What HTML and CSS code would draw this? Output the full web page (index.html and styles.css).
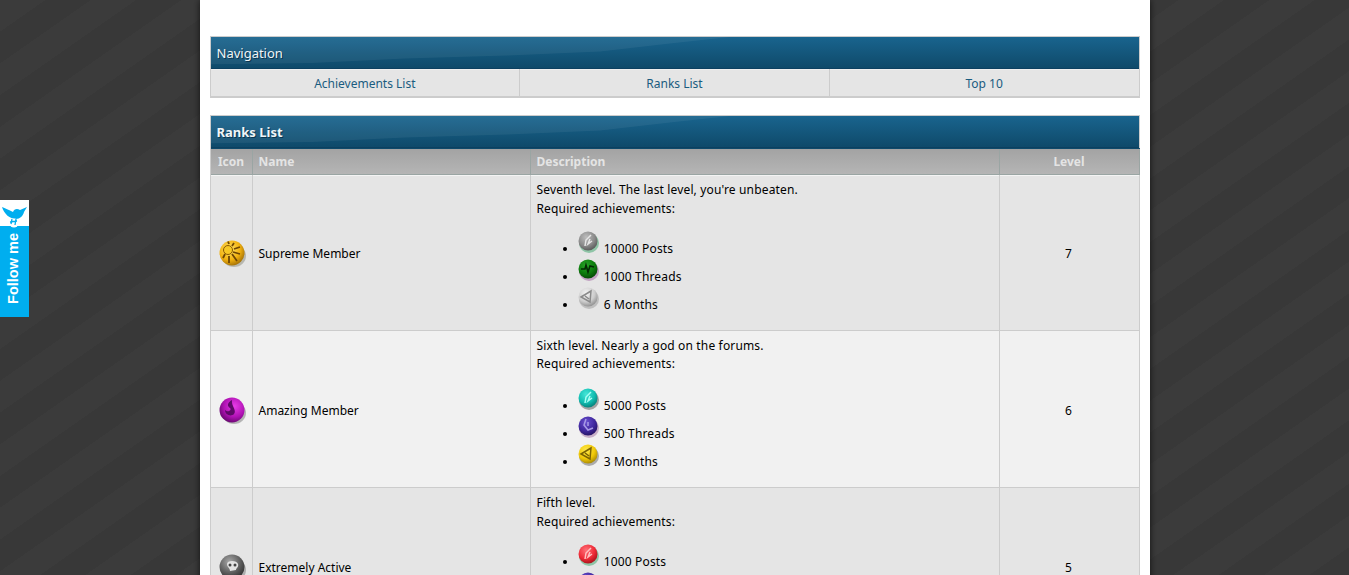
FILE: index.html
```html
<!DOCTYPE html>
<html lang="en">
<head>
    <meta charset="UTF-8">
    <title>Ranks List</title>
    <link rel="stylesheet" href="styles.css">
</head>
<body>

    <!-- shared gradients for the medals -->
    <svg class="defs" width="0" height="0" aria-hidden="true">
        <defs>
            <radialGradient id="ballGold" cx="40%" cy="35%" r="70%"><stop offset="0" stop-color="#ffe46a"/><stop offset=".6" stop-color="#f2b210"/><stop offset="1" stop-color="#9c6a05"/></radialGradient>
            <radialGradient id="ballPurple" cx="60%" cy="35%" r="70%"><stop offset="0" stop-color="#e83ce8"/><stop offset=".6" stop-color="#b012b4"/><stop offset="1" stop-color="#62066a"/></radialGradient>
            <radialGradient id="ballDark" cx="40%" cy="30%" r="75%"><stop offset="0" stop-color="#a8a8a8"/><stop offset=".6" stop-color="#5c5c5c"/><stop offset="1" stop-color="#2c2c2c"/></radialGradient>
            <radialGradient id="ballGrey" cx="40%" cy="30%" r="75%"><stop offset="0" stop-color="#bdbdbd"/><stop offset=".6" stop-color="#8a8a8a"/><stop offset="1" stop-color="#555"/></radialGradient>
            <radialGradient id="ballGreen" cx="40%" cy="30%" r="75%"><stop offset="0" stop-color="#28a528"/><stop offset=".6" stop-color="#0c7a0c"/><stop offset="1" stop-color="#064206"/></radialGradient>
            <radialGradient id="ballSilver" cx="40%" cy="30%" r="75%"><stop offset="0" stop-color="#f4f4f4"/><stop offset=".6" stop-color="#cdcdcd"/><stop offset="1" stop-color="#8a8a8a"/></radialGradient>
            <radialGradient id="ballTeal" cx="40%" cy="30%" r="75%"><stop offset="0" stop-color="#45e6d8"/><stop offset=".6" stop-color="#10bcb0"/><stop offset="1" stop-color="#067a74"/></radialGradient>
            <radialGradient id="ballIndigo" cx="40%" cy="30%" r="75%"><stop offset="0" stop-color="#6a50d0"/><stop offset=".6" stop-color="#40289e"/><stop offset="1" stop-color="#22135e"/></radialGradient>
            <radialGradient id="ballYellow" cx="40%" cy="30%" r="75%"><stop offset="0" stop-color="#ffe94a"/><stop offset=".6" stop-color="#f0c808"/><stop offset="1" stop-color="#a08204"/></radialGradient>
            <radialGradient id="ballRed" cx="40%" cy="30%" r="75%"><stop offset="0" stop-color="#ff7078"/><stop offset=".6" stop-color="#ee2a36"/><stop offset="1" stop-color="#a01018"/></radialGradient>
        </defs>
    </svg>

    <a class="follow" href="#">
        <span class="follow-top">
            <svg width="29" height="29" viewBox="0 0 29 29">
                <path d="M2 7 C5 8 9 10 13 12 C14 9 17 8 20 10 L27 7 L24 12 C23 16 20 19 16 19 C10 19 4 14 2 7Z" fill="#00aeef"/>
                <circle cx="14" cy="23" r="4.500" fill="#fff"/>
                <path d="M12 19 L11 24 M16 19 L15 25 M10 22 L17 21" stroke="#00aeef" stroke-width="1.300" fill="none"/>
            </svg>
        </span>
        <span class="follow-text">Follow me</span>
    </a>

    <div class="wrapper">

        <table class="tborder nav">
            <tr><td class="thead" colspan="3"><span class="thead-text">Navigation</span></td></tr>
            <tr>
                <td class="navcell"><a href="#">Achievements List</a></td>
                <td class="navcell"><a href="#">Ranks List</a></td>
                <td class="navcell"><a href="#">Top 10</a></td>
            </tr>
        </table>

        <table class="tborder ranks">
            <colgroup>
                <col class="col-icon">
                <col class="col-name">
                <col class="col-desc">
                <col class="col-level">
            </colgroup>
            <tr><td class="thead" colspan="4"><strong class="thead-text">Ranks List</strong></td></tr>
            <tr class="tcat">
                <td class="center">Icon</td>
                <td>Name</td>
                <td>Description</td>
                <td class="center">Level</td>
            </tr>

            <tr class="row1">
                <td class="icon-cell">
                    <svg class="rank-icon" viewBox="0 0 28 28"><ellipse cx="15" cy="16" rx="12" ry="11" fill="#8a8a7a" opacity=".5"/><circle cx="13" cy="13" r="12.500" fill="url(#ballGold)"/><circle cx="9" cy="10" r="4.500" fill="#f7c824" stroke="#8a5a04"/><path d="M9 1.500 L10 4 M15 3 L13 6 M21 7 L15 9 M21 14 L14 12 M18 21 L13 14 M10 23 L10 16 M4 18 L6 14" stroke="#6e4604" stroke-width="1.800"/></svg>
                </td>
                <td class="mid">Supreme Member</td>
                <td>
                    Seventh level. The last level, you're unbeaten.<br>
                    Required achievements:<br>
                    <ul class="reqs">
                        <li><svg class="medal" viewBox="0 0 22 22"><circle cx="11" cy="12" r="10" fill="#3aa56a" opacity=".5"/><circle cx="10" cy="10" r="9.500" fill="url(#ballGrey)"/><path d="M13 4 L8 9 L7 15 M12 8 L10 13 L14 10" stroke="#e6e6e6" stroke-width="1.500" fill="none"/></svg> 10000 Posts</li>
                        <li><svg class="medal" viewBox="0 0 22 22"><circle cx="11" cy="12" r="10" fill="#a060a0" opacity=".5"/><circle cx="10" cy="10" r="9.500" fill="url(#ballGreen)"/><path d="M3 10 L7 10 L8 6 L10 13 L12 7 L16 8" stroke="#032a03" stroke-width="1.600" fill="none"/></svg> 1000 Threads</li>
                        <li><svg class="medal" viewBox="0 0 22 22"><circle cx="11" cy="12" r="10" fill="#888" opacity=".4"/><circle cx="10" cy="10" r="9.500" fill="url(#ballSilver)"/><path d="M3 10 L13 4 L12 15 Z M7 9 L11 12" stroke="#8a8a8a" stroke-width="1.500" fill="none"/></svg> 6 Months</li>
                    </ul>
                </td>
                <td class="mid center">7</td>
            </tr>

            <tr class="row2">
                <td class="icon-cell">
                    <svg class="rank-icon" viewBox="0 0 28 28"><ellipse cx="15" cy="16" rx="12" ry="11" fill="#777" opacity=".5"/><circle cx="13" cy="13" r="12.500" fill="url(#ballPurple)"/><path d="M13 3 C8 6 8 9 11 11 C13 13 9 16 6 13 C6 18 12 20 15 17 C18 13 12 9 13 3Z" fill="#5c0a66"/></svg>
                </td>
                <td class="mid">Amazing Member</td>
                <td>
                    Sixth level. Nearly a god on the forums.<br>
                    Required achievements:<br>
                    <ul class="reqs">
                        <li><svg class="medal" viewBox="0 0 22 22"><circle cx="11" cy="12" r="10" fill="#555" opacity=".5"/><circle cx="10" cy="10" r="9.500" fill="url(#ballTeal)"/><path d="M13 4 L8 9 L7 15 M12 8 L10 13 L14 10" stroke="#a8fff4" stroke-width="1.500" fill="none"/></svg> 5000 Posts</li>
                        <li><svg class="medal" viewBox="0 0 22 22"><circle cx="11" cy="12" r="10" fill="#a070a0" opacity=".5"/><circle cx="10" cy="10" r="9.500" fill="url(#ballIndigo)"/><path d="M8 3 L6 9 L10 14 L15 12 M10 6 L10 10" stroke="#a89ae6" stroke-width="1.500" fill="none"/></svg> 500 Threads</li>
                        <li><svg class="medal" viewBox="0 0 22 22"><circle cx="11" cy="12" r="10" fill="#666" opacity=".5"/><circle cx="10" cy="10" r="9.500" fill="url(#ballYellow)"/><path d="M3 10 L13 4 L12 15 Z M7 9 L11 12" stroke="#7a6204" stroke-width="1.500" fill="none"/></svg> 3 Months</li>
                    </ul>
                </td>
                <td class="mid center">6</td>
            </tr>

            <tr class="row1 row3">
                <td class="icon-cell">
                    <svg class="rank-icon" viewBox="0 0 28 28"><ellipse cx="15" cy="16" rx="12" ry="11" fill="#777" opacity=".5"/><circle cx="13" cy="13" r="12.500" fill="url(#ballDark)"/><path d="M8 10 C8 6 18 6 19 10 C20 13 17 14 17 16 L11 17 C11 14 8 13 8 10Z" fill="#e4e4e4"/><circle cx="11" cy="11" r="1.500" fill="#444"/><circle cx="16" cy="11" r="1.500" fill="#444"/></svg>
                </td>
                <td class="mid">Extremely Active</td>
                <td>
                    Fifth level.<br>
                    Required achievements:<br>
                    <ul class="reqs">
                        <li><svg class="medal" viewBox="0 0 22 22"><circle cx="11" cy="12" r="10" fill="#3aa56a" opacity=".5"/><circle cx="10" cy="10" r="9.500" fill="url(#ballRed)"/><path d="M13 4 L8 9 L7 15 M12 8 L10 13 L14 10" stroke="#ffc0c0" stroke-width="1.500" fill="none"/></svg> 1000 Posts</li>
                        <li><svg class="medal" viewBox="0 0 22 22"><circle cx="11" cy="12" r="10" fill="#a070a0" opacity=".5"/><circle cx="10" cy="10" r="9.500" fill="url(#ballIndigo)"/><path d="M8 3 L6 9 L10 14 L15 12 M10 6 L10 10" stroke="#a89ae6" stroke-width="1.500" fill="none"/></svg> 250 Threads</li>
                        <li><svg class="medal" viewBox="0 0 22 22"><circle cx="11" cy="12" r="10" fill="#666" opacity=".5"/><circle cx="10" cy="10" r="9.500" fill="url(#ballGrey)"/><path d="M3 10 L13 4 L12 15 Z M7 9 L11 12" stroke="#e6e6e6" stroke-width="1.500" fill="none"/></svg> 1 Month</li>
                    </ul>
                </td>
                <td class="mid center">5</td>
            </tr>
        </table>
    </div>

</body>
</html>
```

FILE: styles.css
```css
html, body {
    height: 100%;
    overflow: hidden;
}
body {
    margin: 0;
    font-family: "Noto Sans", Tahoma, sans-serif;
    font-size: 12px;
    color: #000;
    background-color: #3a3a3a;
    background-image: repeating-linear-gradient(145deg, #3b3b3b 0, #3b3b3b 26px, #383838 26px, #383838 52px);
}
a {
    color: #1a5c80;
    text-decoration: none;
}
.defs {
    position: absolute;
}
.wrapper {
    width: 930px;
    margin: 0 auto;
    padding: 36px 10px 0;
    background: #fff;
    box-shadow: 0 0 7px rgba(0, 0, 0, 0.7);
    min-height: 800px;
}
.tborder {
    width: 930px;
    table-layout: fixed;
    border-collapse: separate;
    border-spacing: 1px;
    background: #ccc;
    margin-bottom: 17px;
}
.nav {
    border-bottom: 1px solid #ccc;
}
.col-icon {
    width: 41px;
}
.col-name {
    width: 277px;
}
.col-desc {
    width: 468px;
}
.col-level {
    width: 139px;
}
.tborder td {
    padding: 0 5px 0 6px;
}
.tborder td.thead {
    position: relative;
    height: 31px;
    padding: 0 6px;
    background: linear-gradient(to bottom, #19648e 0, #0f4a6a 100%);
    border-bottom: 1px solid #0c4060;
    color: #f0f5f8;
    font-size: 13px;
    text-shadow: 1px 1px 0 #0a3550;
}
/* the lighter swoosh on the left of the title bar */
.thead::before {
    content: "";
    position: absolute;
    top: 0;
    left: 0;
    right: 0;
    bottom: 0;
    background: rgba(255, 255, 255, 0.06);
    clip-path: polygon(0 0, 56% 0, 50% 19%, 42% 47%, 32% 60%, 21% 69%, 11% 84%, 0 88%);
}
.thead-text {
    position: relative;
}
.tborder .navcell {
    height: 26px;
    padding: 0 5px;
    text-align: center;
    background: #e5e5e5;
    box-shadow: 0 -1px 0 #eee;
}
.tcat td {
    height: 25px;
    background: linear-gradient(to bottom, #a3a3a3 0, #b5b5b5 100%);
    border-bottom: 1px solid #9aa5a3;
    box-shadow: 1px 0 0 #9aa5a3, 0 -1px 0 #0f4a6a, 1px -1px 0 #0f4a6a;
    color: #e4e4e4;
    font-weight: bold;
}
.tborder .tcat .center {
    padding: 0 5px;
}
.tcat + tr td {
    box-shadow: 0 -1px 0 #f4f4f4;
}
.tborder .row1 td,
.tborder .row2 td {
    padding: 5px 5px 5px 6px;
    line-height: 18.5px;
    letter-spacing: 0.15px;
}
.row1 td {
    background: #e5e5e5;
}
.row2 td {
    background: #f1f1f1;
    box-sizing: border-box;
    height: 156px;
}
.center {
    text-align: center;
}
/* name and level sit a little under the middle of the row */
.tborder .row1 .mid,
.tborder .row2 .mid {
    padding-top: 8px;
    letter-spacing: 0;
}
.tborder .row2 .mid,
.tborder .row3 .mid {
    padding-top: 10px;
}
.tborder .row1 .mid.center,
.tborder .row2 .mid.center {
    padding-left: 4px;
}
.tborder .row1 .icon-cell,
.tborder .row2 .icon-cell {
    padding: 2px 0 0 8px;
}
.tborder .row2 .icon-cell,
.tborder .row3 .icon-cell {
    padding-top: 4px;
}
.tborder .row3 td {
    padding-top: 6px;
}
.rank-icon {
    width: 28px;
    height: 28px;
    vertical-align: middle;
}
.reqs {
    margin: 13px 0 10px;
    padding: 0 0 0 41px;
}
.row2 .reqs {
    margin-top: 14px;
}
.reqs li {
    height: 28px;
}
.medal {
    width: 22px;
    height: 22px;
    margin-right: 1px;
}
.follow {
    position: fixed;
    left: 0;
    top: 200px;
    width: 29px;
    height: 117px;
    background: #00aeef;
    color: #fff;
}
.follow-top {
    display: block;
    height: 26px;
    background: #fff;
}
.follow-top svg {
    display: block;
}
.follow-text {
    position: absolute;
    left: 4px;
    bottom: 13px;
    writing-mode: vertical-rl;
    transform: rotate(180deg);
    font-family: "Liberation Sans", Arial, sans-serif;
    font-weight: bold;
    font-size: 14.5px;
    line-height: 19px;
    white-space: nowrap;
}
```
